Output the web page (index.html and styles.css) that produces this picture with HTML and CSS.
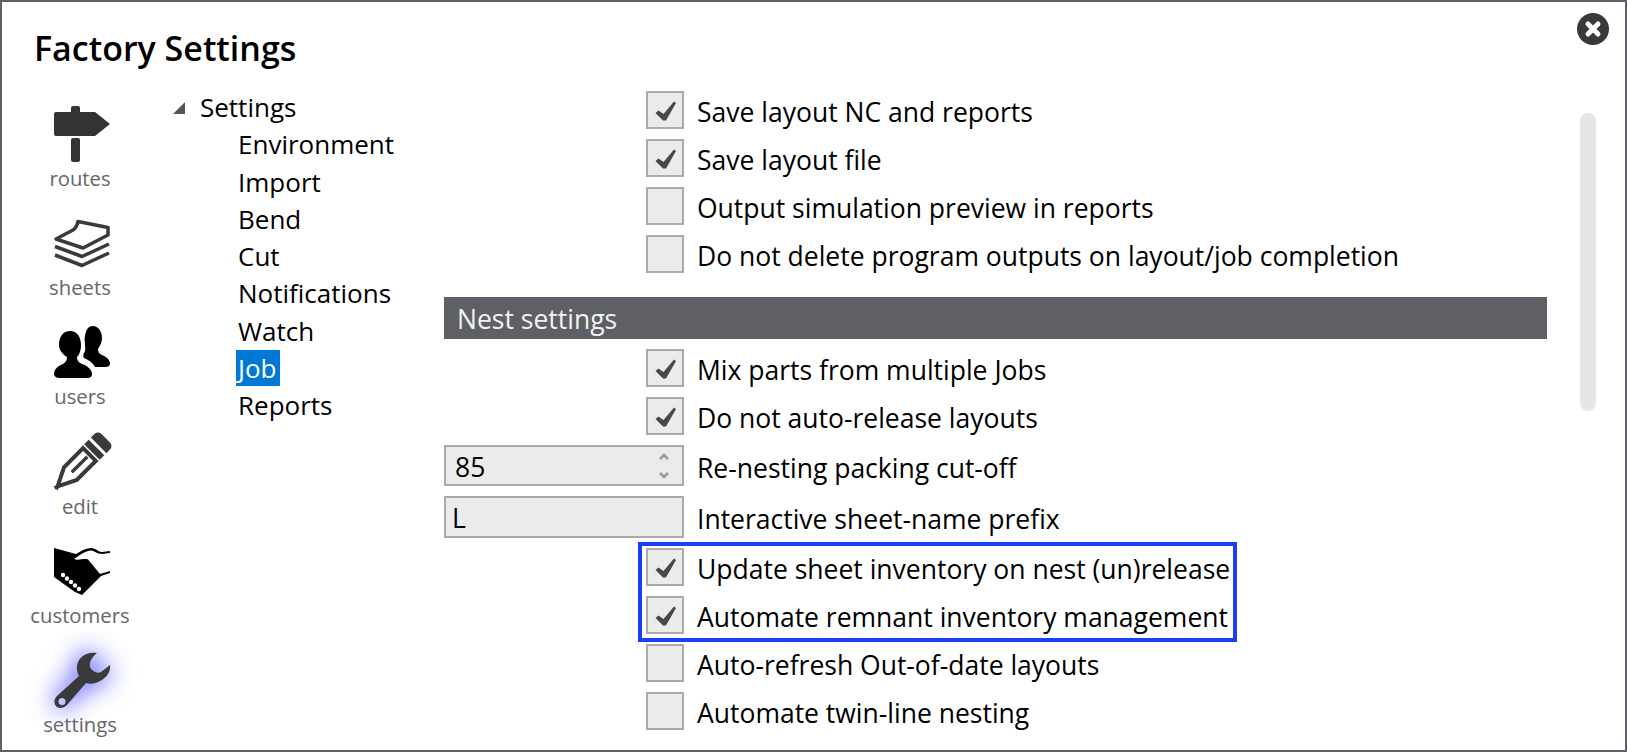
FILE: index.html
```html
<!DOCTYPE html>
<html lang="en">
<head>
  <meta charset="UTF-8" />
  <title>Factory Settings</title>
  <link rel="stylesheet" href="styles.css">
</head>
<body>
  <svg class="sprite" aria-hidden="true">
    <symbol id="check" viewBox="0 0 34 34">
      <path d="M7.500 20l3-2.500 5 3.500L26 8.500l2 1.500-10 17.500h-3z" fill="#484848"/>
    </symbol>
  </svg>

  <div class="frame">
    <h1 class="title">Factory Settings</h1>

    <button class="close" type="button" aria-label="Close">
      <svg viewBox="0 0 32 32" width="32" height="32">
        <circle cx="16" cy="16" r="16" fill="#3a3a3a"/>
        <path d="M11 11l10 10M21 11l-10 10" stroke="#fff" stroke-width="5" stroke-linecap="round"/>
      </svg>
    </button>

    <div class="main">
      <nav class="nav">
        <a class="nav-item">
          <svg class="nav-icon" viewBox="0 0 56 56">
            <path fill="#333" d="M19 0h5a2 2 0 0 1 2 2v4h15l15 12-15 12H2a2 2 0 0 1-2-2V8a2 2 0 0 1 2-2h15V2a2 2 0 0 1 2-2z"/>
            <rect fill="#333" x="17" y="32" width="9" height="24" rx="2"/>
          </svg>
          <span>routes</span>
        </a>
        <a class="nav-item">
          <svg class="nav-icon" viewBox="0 -5 56 56">
            <g fill="none" stroke="#3a3a3a" stroke-width="3.500" stroke-linejoin="round">
              <path d="M24 1.500C23 6 22 8 19 10L2 19l27 9 25-13V7.500z"/>
              <path d="M1 26.500l27 10 27-12.500"/>
              <path d="M1 35l27 10.500L55 33"/>
            </g>
          </svg>
          <span>sheets</span>
        </a>
        <a class="nav-item">
          <svg class="nav-icon" viewBox="0 -2 56 56">
            <path fill="#000" d="M39 0c5 0 9 5 9 12 0 4-2 8-4 11 0 3 1 5 4 6 5 2 8 5 8 9 0 2-2 3-5 3H41c-2-4-6-7-11-9-1-1-1-3 0-5 2-3 1-5 1-9 0-2-1-5 0-8 1-6 3-10 8-10z"/>
            <path fill="#000" d="M16 5c7 0 11 6 11 14 0 6-2 10-4 12 0 3 1 5 5 7 6 2 10 6 10 10 0 3-2 4-5 4H5c-3 0-5-2-5-4 0-5 4-8 9-10 3-2 4-4 4-7-3-2-8-6-8-12 0-8 4-14 11-14z"/>
          </svg>
          <span>users</span>
        </a>
        <a class="nav-item">
          <svg class="nav-icon" viewBox="0 0 56 56">
            <g transform="translate(1.500 54.500) rotate(45)">
              <path fill="none" stroke="#3a3a3a" stroke-width="4" stroke-linejoin="miter" d="M0-3L-9-21V-48H9V-21z"/>
              <path fill="#3a3a3a" d="M-1.700-45h3.400v22h-3.400z"/>
              <path fill="#3a3a3a" d="M-3 0L0-7 3 0z"/>
              <path fill="#3a3a3a" d="M-11-58H11v6.500H-11z"/>
              <path fill="#3a3a3a" d="M-11-61v-5a5 5 0 0 1 5-5H6a5 5 0 0 1 5 5v5z"/>
            </g>
          </svg>
          <span>edit</span>
        </a>
        <a class="nav-item">
          <svg class="nav-icon" viewBox="0 -5 56 56">
            <path fill="#000" d="M0 0l22 6c6-4 11-6 15-6 5 0 7 4 11 4l8-1v2l-8 1c-5 0-7-3-11-3.500-5 .500-10 3.500-17 8.500 4 2 10-1 14 .500L46 26l10-3v2l-9 3-19 19-7-3L0 29z"/>
            <g fill="#fff">
              <circle cx="9" cy="27" r="2.200"/>
              <circle cx="13" cy="30.500" r="2.200"/>
              <circle cx="17" cy="34" r="2.200"/>
              <circle cx="21" cy="37.500" r="2.200"/>
              <circle cx="25" cy="41" r="2.200"/>
            </g>
          </svg>
          <span>customers</span>
        </a>
        <a class="nav-item">
          <svg class="nav-icon nav-icon-active" viewBox="0 0 56 56">
            <path fill="#3a3a3a" fill-rule="evenodd" d="M43 1C30-1 22 8 23 17c0 3 1 5 2 7L3 44c-4 4-3 9 0 11 3 2 7 1 10-2l19-22c4 1 8 1 12-1 8-3 13-10 12-17l-9 7c-4 2-9-1-11-5-1-5 2-10 7-14zM8 46a3.500 3.500 0 1 1 0 7 3.500 3.500 0 0 1 0-7z"/>
          </svg>
          <span>settings</span>
        </a>
      </nav>

      <div class="tree">
        <div class="tree-root">
          <svg class="tree-arrow" viewBox="0 0 12 12" width="12" height="12"><path d="M0 12L12 0v12z" fill="#555"/></svg>
          <span>Settings</span>
        </div>
        <div class="tree-item">Environment</div>
        <div class="tree-item">Import</div>
        <div class="tree-item">Bend</div>
        <div class="tree-item">Cut</div>
        <div class="tree-item">Notifications</div>
        <div class="tree-item">Watch</div>
        <div class="tree-item"><span class="selected">Job</span></div>
        <div class="tree-item">Reports</div>
      </div>

      <div class="content">
        <div class="row"><span class="box"><svg><use href="#check"/></svg></span><label>Save layout NC and reports</label></div>
        <div class="row"><span class="box"><svg><use href="#check"/></svg></span><label>Save layout file</label></div>
        <div class="row"><span class="box"></span><label>Output simulation preview in reports</label></div>
        <div class="row"><span class="box"></span><label>Do not delete program outputs on layout/job completion</label></div>

        <div class="section">Nest settings</div>

        <div class="row"><span class="box"><svg><use href="#check"/></svg></span><label>Mix parts from multiple Jobs</label></div>
        <div class="row"><span class="box"><svg><use href="#check"/></svg></span><label>Do not auto-release layouts</label></div>
        <div class="row">
          <span class="field field-number">85
            <svg class="spin" viewBox="0 0 12 32" width="12" height="32">
              <path d="M2 9l4-4 4 4M2 23l4 4 4-4" fill="none" stroke="#999" stroke-width="2.500"/>
            </svg>
          </span>
          <label>Re-nesting packing cut-off</label>
        </div>
        <div class="row"><span class="field field-text">L</span><label>Interactive sheet-name prefix</label></div>

        <div class="marked">
          <div class="row"><span class="box"><svg><use href="#check"/></svg></span><label>Update sheet inventory on nest (un)release</label></div>
          <div class="row"><span class="box"><svg><use href="#check"/></svg></span><label>Automate remnant inventory management</label></div>
          <div class="marker"></div>
        </div>

        <div class="row"><span class="box"></span><label>Auto-refresh Out-of-date layouts</label></div>
        <div class="row"><span class="box"></span><label>Automate twin-line nesting</label></div>
      </div>
    </div>

    <div class="scrollbar"></div>
  </div>
</body>
</html>
```

FILE: styles.css
```css
* {
  box-sizing: border-box;
}

body {
  margin: 0;
  font-family: "Open Sans", "Noto Sans", sans-serif;
  color: #000;
  background: #fff;
}

.sprite {
  display: none;
}

.frame {
  position: relative;
  width: 1627px;
  height: 752px;
  border: 2px solid #5f6065;
  overflow: hidden;
}

.title {
  margin: 0;
  padding: 26px 0 0 32px;
  height: 66px;
  font-size: 34px;
  line-height: 40px;
  font-weight: 600;
}

.close {
  position: absolute;
  top: 11px;
  right: 16px;
  width: 32px;
  height: 32px;
  padding: 0;
  border: none;
  background: none;
}

.main {
  display: flex;
}

/* left icon column */
.nav {
  width: 156px;
  padding-top: 38px;
  flex: none;
}

.nav-item {
  display: flex;
  flex-direction: column;
  align-items: center;
  height: 109.200px;
  font-size: 20.300px;
  line-height: 30px;
  color: #666;
}

.nav-icon {
  width: 56px;
  height: 56px;
  margin: 0 0 1px 4px;
  overflow: visible;
  flex: none;
}

.nav-icon-active {
  filter: drop-shadow(0 0 11px #7c7cff) drop-shadow(0 0 11px #a4a4ff);
}

/* settings tree */
.tree {
  width: 286px;
  padding: 21px 0 0 15px;
  flex: none;
  font-size: 26px;
  line-height: 37.300px;
}

.tree-root {
  display: flex;
  align-items: center;
}

.tree-arrow {
  margin-right: 15px;
}

.tree-item {
  padding-left: 65px;
  white-space: nowrap;
}

.selected {
  display: inline-block;
  height: 36px;
  padding: 0 3px 0 2px;
  margin-left: -2px;
  background: #0078d7;
  color: #fff;
  line-height: 36px;
}

/* settings rows */
.content {
  width: 1103px;
  padding-top: 23px;
  font-size: 26.500px;
}

.row {
  display: grid;
  grid-template-columns: 240px 1fr;
  column-gap: 13px;
  align-items: center;
  min-height: 38px;
  margin-bottom: 10px;
  white-space: nowrap;
}

.row label {
  padding-top: 4px;
  line-height: 34px;
}

.box {
  grid-column: 1;
  justify-self: end;
  width: 38px;
  height: 38px;
  border: 2px solid #aaa;
  background: #ebebeb;
}

.box svg {
  display: block;
  width: 34px;
  height: 34px;
  filter: blur(0.4px);
}

.field {
  position: relative;
  display: block;
  border: 2px solid #aaa;
  background: #ebebeb;
}

.field-number {
  height: 41px;
  padding-left: 9px;
  line-height: 41px;
}

.field-text {
  height: 42px;
  padding-left: 6px;
  line-height: 40px;
}

.spin {
  position: absolute;
  top: 3px;
  right: 12px;
}

.section {
  height: 42px;
  margin: 24px 0 10px;
  padding-left: 13px;
  background: #5f6065;
  color: #f2f2f2;
  line-height: 44px;
}

.marked {
  position: relative;
}

/* blue highlight drawn over the two rows */
.marker {
  position: absolute;
  top: -6px;
  left: 194px;
  width: 599px;
  height: 100px;
  border: 4px solid #1d3ff0;
}

.scrollbar {
  position: absolute;
  top: 111px;
  left: 1578px;
  width: 16px;
  height: 298px;
  border-radius: 8px;
  background: #e6e6e6;
}
```
